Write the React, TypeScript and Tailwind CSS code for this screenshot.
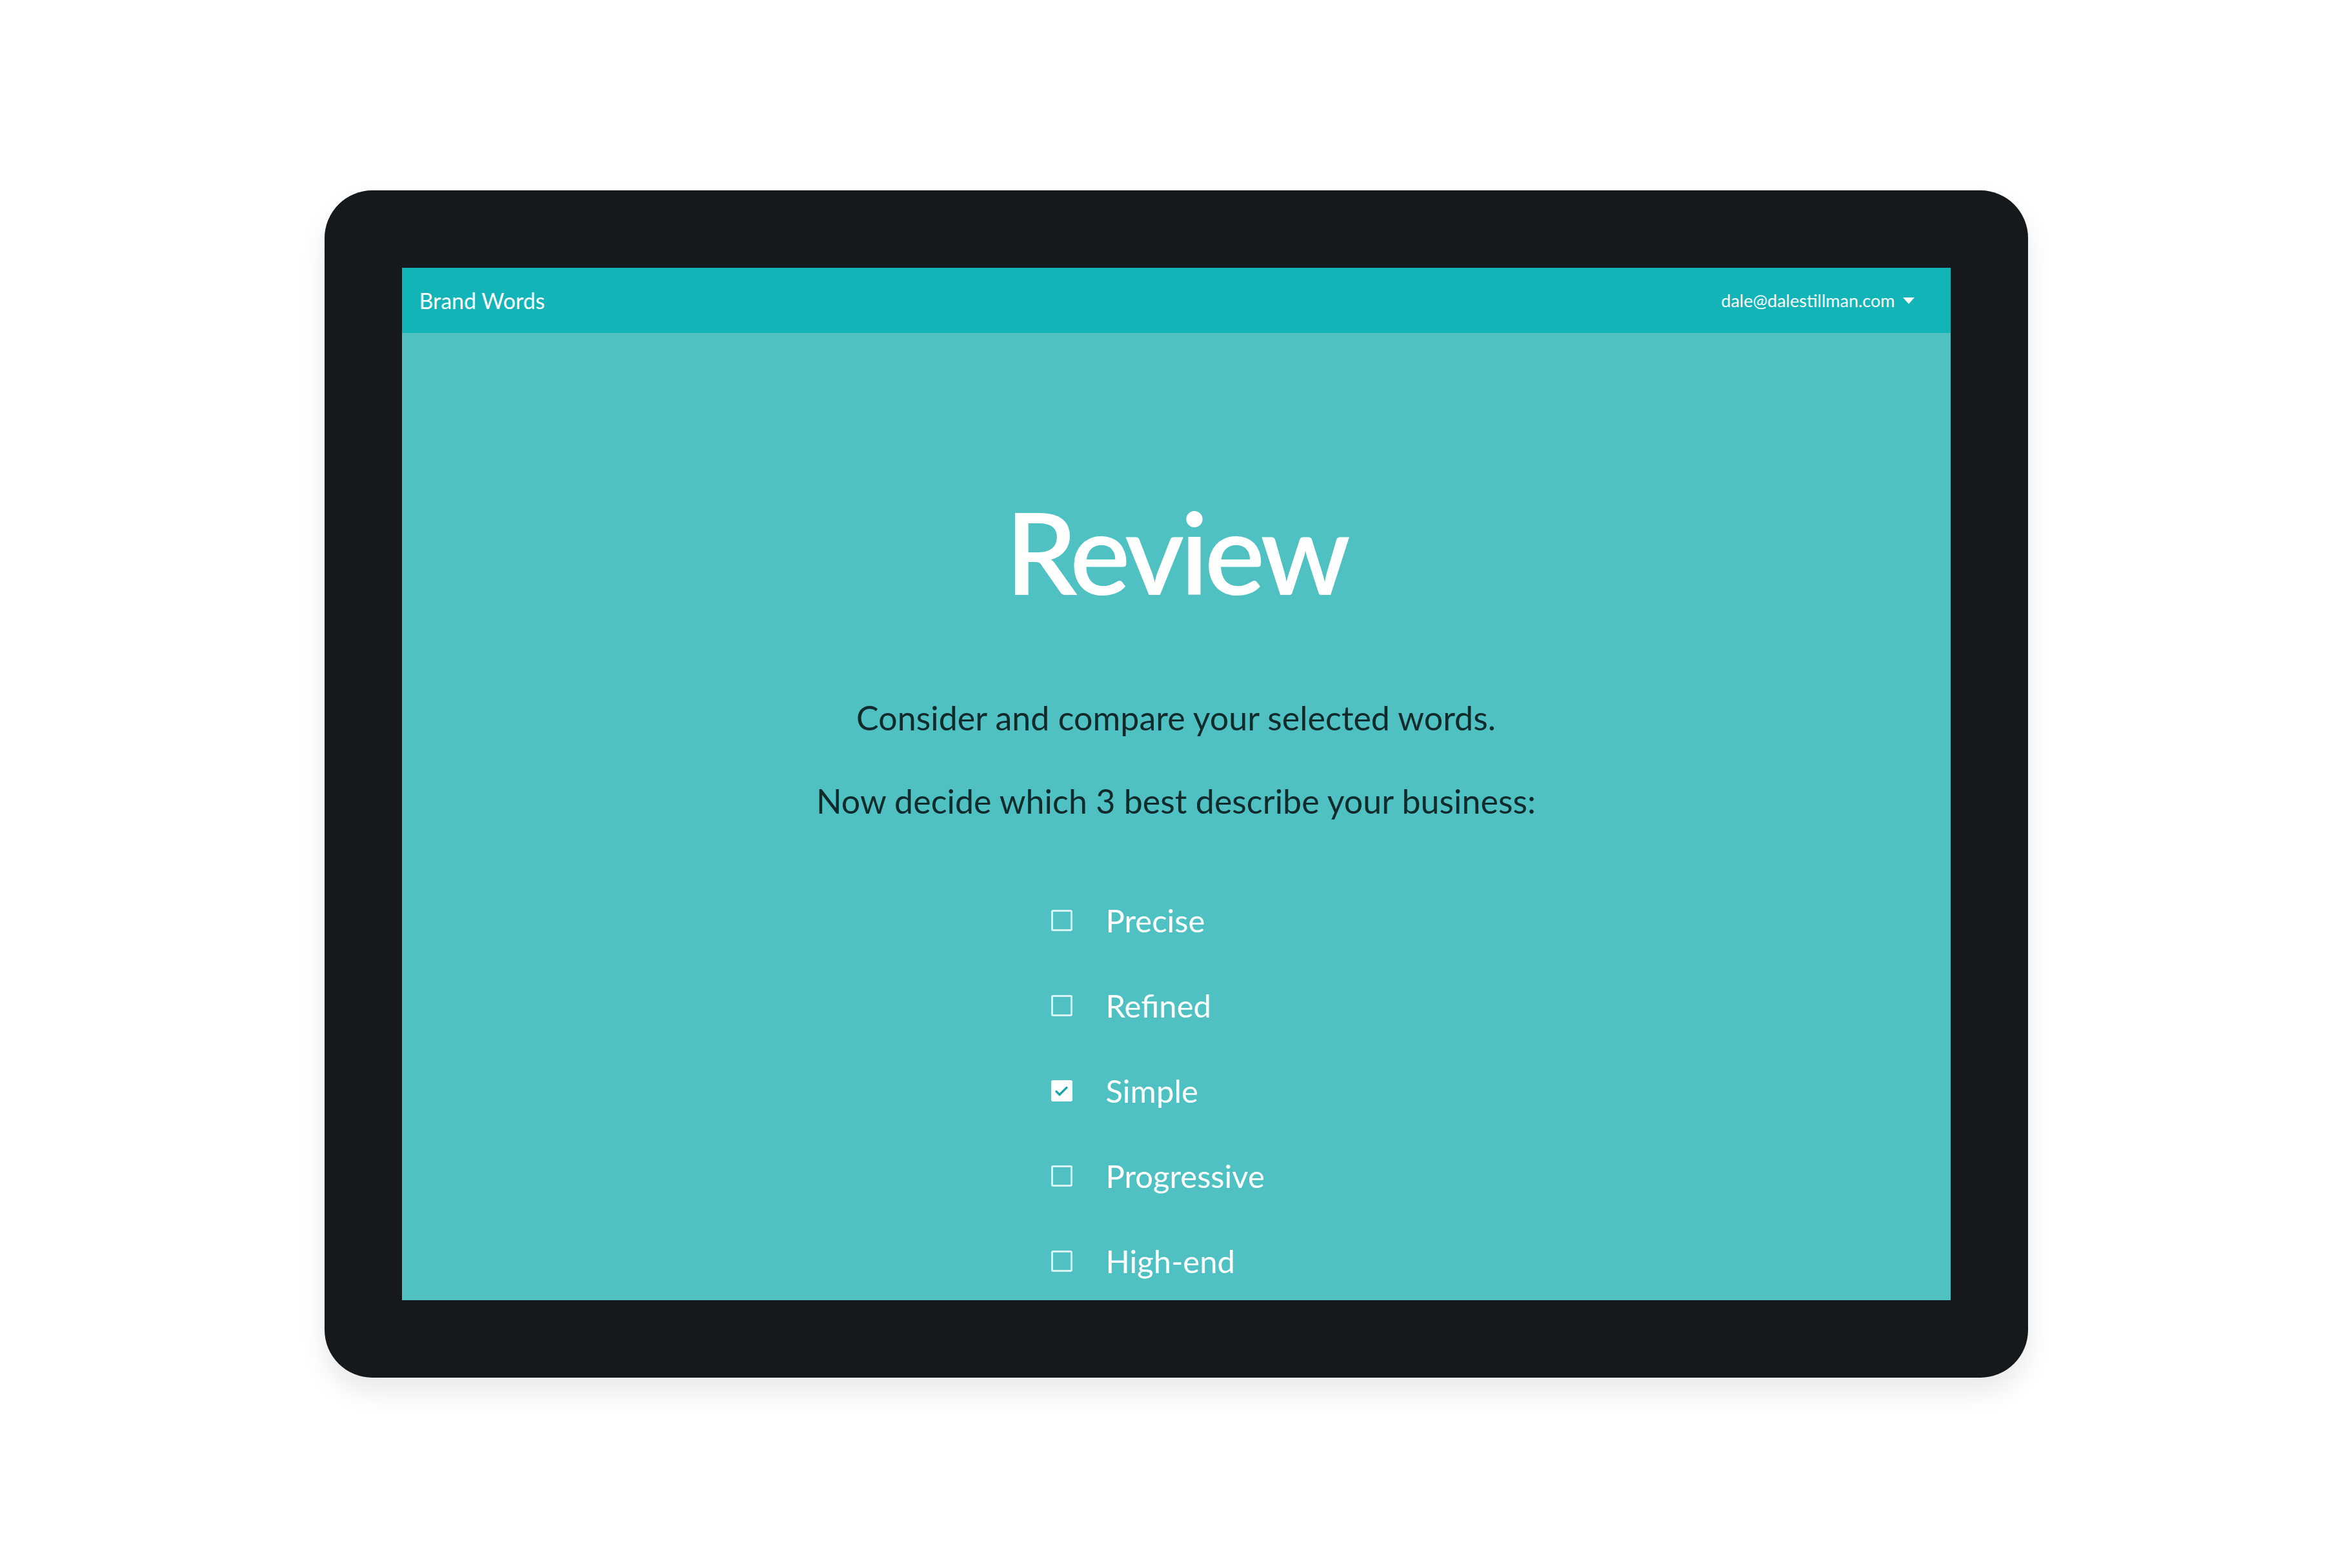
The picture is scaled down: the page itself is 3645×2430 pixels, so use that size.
import { useState } from 'react'

const WORDS = ['Precise', 'Refined', 'Simple', 'Progressive', 'High-end']

function CheckBox({ checked }: { checked: boolean }) {
  if (checked) {
    return (
      <span className="flex items-center justify-center w-[33px] h-[33px] rounded-[3px] bg-white shrink-0">
        <svg viewBox="0 0 24 24" className="w-[24px] h-[24px]" fill="none" stroke="#15a6a9" strokeWidth="3.2" strokeLinecap="round" strokeLinejoin="round">
          <path d="M4 12.5l5 5L20 6.5" />
        </svg>
      </span>
    )
  }
  return <span className="block w-[33px] h-[33px] rounded-[3px] border-[3px] border-white/80 shrink-0" />
}

export default function App() {
  const [selected, setSelected] = useState<string[]>(['Simple'])

  function toggle(w: string) {
    setSelected((s) => (s.includes(w) ? s.filter((x) => x !== w) : [...s, w]))
  }

  return (
    <div className="w-full h-[2430px] flex items-center justify-center bg-white font-['Lato',sans-serif]">
      {/* device frame */}
      <div className="w-[2640px] h-[1840px] p-[120px] rounded-[74px] bg-[#15191c] shadow-[0_22px_40px_rgba(0,0,0,0.09)]">
        <div className="w-full h-full flex flex-col bg-[#4fc1c2] overflow-hidden">
          {/* top bar */}
          <div className="h-[101px] shrink-0 flex items-center justify-between pl-[27px] pr-[56px] bg-[#13b4b8] text-white">
            <span className="text-[34px] leading-none">Brand Words</span>
            <div className="flex items-center gap-[12px]">
              <span className="text-[27px] leading-none">dale@dalestillman.com</span>
              <svg viewBox="0 0 18 10" className="w-[18px] h-[10px]" fill="white">
                <polygon points="0,0 18,0 9,10" />
              </svg>
            </div>
          </div>

          {/* body */}
          <div className="flex flex-col items-center pt-[250px]">
            <h1 className="text-[176px] leading-none font-semibold text-white tracking-[-6px]">Review</h1>
            <p className="mt-[144px] text-[52px] leading-none text-[#112b2c]">Consider and compare your selected words.</p>
            <p className="mt-[77px] text-[52px] leading-none text-[#112b2c]">Now decide which 3 best describe your business:</p>

            <div className="mt-[135px] w-[388px] flex flex-col gap-[83px]">
              {WORDS.map((w) => (
                <button key={w} onClick={() => toggle(w)} className="flex items-center gap-[52px] text-left">
                  <CheckBox checked={selected.includes(w)} />
                  <span className="text-[49px] leading-none text-white">{w}</span>
                </button>
              ))}
            </div>
          </div>
        </div>
      </div>
    </div>
  )
}
